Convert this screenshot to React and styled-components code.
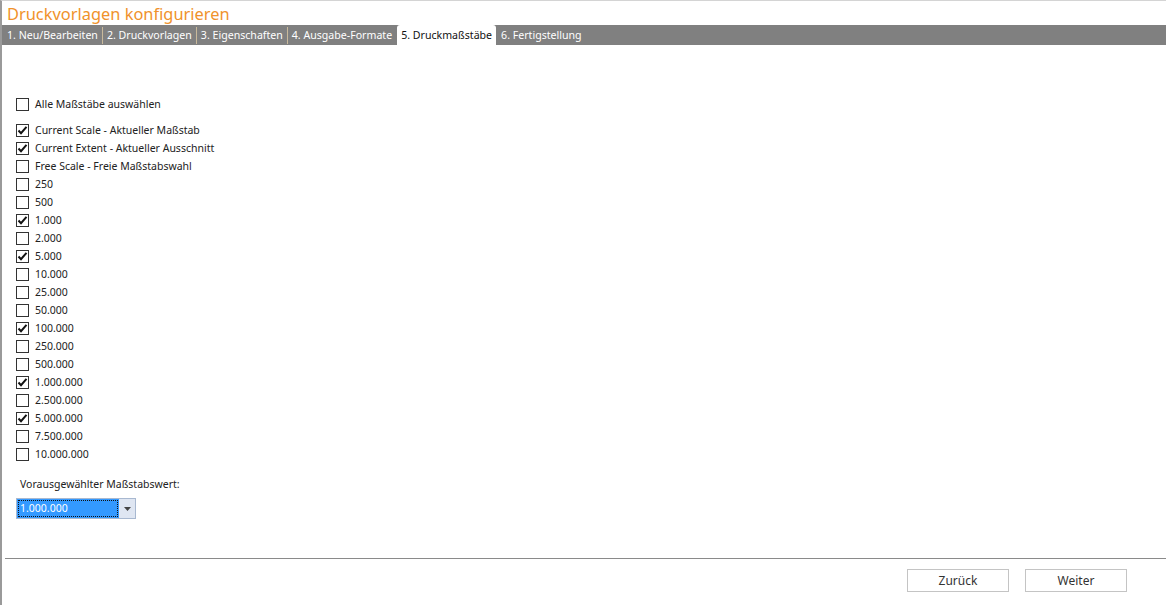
import React, { useState } from "react"
import styled, { createGlobalStyle } from "styled-components"

const GlobalStyle = createGlobalStyle`
html, body {
    margin:0;
    padding:0;
    background:#fff;
}
body{
    font-family:"Noto Sans", "Open Sans", sans-serif;
}
`

const tabs = [
    "1. Neu/Bearbeiten",
    "2. Druckvorlagen",
    "3. Eigenschaften",
    "4. Ausgabe-Formate",
    "5. Druckmaßstäbe",
    "6. Fertigstellung",
]

const scales = [
    ["Current Scale - Aktueller Maßstab", true],
    ["Current Extent - Aktueller Ausschnitt", true],
    ["Free Scale - Freie Maßstabswahl", false],
    ["250", false],
    ["500", false],
    ["1.000", true],
    ["2.000", false],
    ["5.000", true],
    ["10.000", false],
    ["25.000", false],
    ["50.000", false],
    ["100.000", true],
    ["250.000", false],
    ["500.000", false],
    ["1.000.000", true],
    ["2.500.000", false],
    ["5.000.000", true],
    ["7.500.000", false],
    ["10.000.000", false],
]

function Check({ checked, onClick, label }) {
    return (
        <Row onClick={onClick}>
            <Box>
                {checked && (
                    <svg width="11" height="11" viewBox="0 0 11 11">
                        <path d="M1.5 5.5 L4 8.2 L9.5 1.8" fill="none" stroke="#111" strokeWidth="2" />
                    </svg>
                )}
            </Box>
            <span>{label}</span>
        </Row>
    )
}

export default function App() {
    const [values, setValues] = useState(scales.map(s => s[1]))
    const all = values.every(v => v)
    const toggle = i => setValues(values.map((v, j) => (j === i ? !v : v)))
    return (
        <>
            <GlobalStyle />
            <Page>
                <Title>Druckvorlagen konfigurieren</Title>
                <TabBar>
                    {tabs.map((t, i) => (
                        <Tab key={t} $active={i === 4} $sep={i < 3}>{t}</Tab>
                    ))}
                </TabBar>
                <Content>
                    <Check label="Alle Maßstäbe auswählen" checked={all} onClick={() => setValues(values.map(() => !all))} />
                    <List>
                        {scales.map((s, i) => (
                            <Check key={s[0]} label={s[0]} checked={values[i]} onClick={() => toggle(i)} />
                        ))}
                    </List>
                    <FieldLabel>Vorausgewählter Maßstabswert:</FieldLabel>
                    <Select>
                        <SelectValue><span>1.000.000</span></SelectValue>
                        <SelectArrow>
                            <svg width="7" height="4" viewBox="0 0 7 4"><path d="M0 0 H7 L3.5 4 Z" fill="#444" /></svg>
                        </SelectArrow>
                    </Select>
                </Content>
                <Footer>
                    <Button>Zurück</Button>
                    <Button>Weiter</Button>
                </Footer>
            </Page>
        </>
    )
}

const Page = styled.div`
width:1166px;
height:605px;
box-sizing:border-box;
border-top:1px solid #d4d4d4;
border-left:2px solid #9a9a9a;
display:flex;
flex-direction:column;
overflow:hidden;
`

const Title = styled.div`
color:#f0922b;
font-size:16.4px;
line-height:22px;
height:24px;
padding-left:5px;
box-sizing:border-box;
padding-top:2px;
`

const TabBar = styled.div`
background:#808080;
height:20px;
display:flex;
align-items:flex-end;
padding-left:1px;
`

const Tab = styled.div`
height:20px;
box-sizing:border-box;
padding:0 4px;
font-size:10.6px;
line-height:20px;
color:${p => (p.$active ? "#111" : "#fff")};
background:${p => (p.$active ? "#fff" : "transparent")};
border-radius:${p => (p.$active ? "3px 3px 0 0" : "0")};
position:relative;
margin-right:1px;
white-space:nowrap;
&::after{
    content:"";
    display:${p => (p.$sep ? "block" : "none")};
    position:absolute;
    right:-1px;
    top:2px;
    bottom:1px;
    width:1px;
    background:#c9b99b;
}
`

const Content = styled.div`
flex:1;
padding:50px 0 0 14px;
display:flex;
flex-direction:column;
`

const List = styled.div`
margin-top:8px;
display:flex;
flex-direction:column;
`

const Row = styled.div`
display:flex;
align-items:center;
gap:6px;
height:18px;
font-size:10.5px;
color:#222;
cursor:default;
`

const Box = styled.div`
width:13px;
height:13px;
box-sizing:border-box;
border:1px solid #333;
background:#fff;
display:flex;
align-items:center;
justify-content:center;
`

const FieldLabel = styled.div`
margin-top:14px;
padding-left:4px;
font-size:10.5px;
color:#222;
line-height:14px;
`

const Select = styled.div`
margin-top:7px;
width:120px;
height:21px;
box-sizing:border-box;
border:1px solid #a8b8d0;
display:flex;
`

const SelectValue = styled.div`
flex:1;
background:#3399ff;
padding:1px;
box-sizing:border-box;
span{
    display:block;
    height:100%;
    box-sizing:border-box;
    border:1px dotted #111;
    color:#fff;
    font-size:10.5px;
    line-height:15px;
    padding-left:1px;
}
`

const SelectArrow = styled.div`
width:16px;
background:#dfe6f2;
display:flex;
align-items:center;
justify-content:center;
`

const Footer = styled.div`
margin-left:3px;
height:47px;
box-sizing:border-box;
border-top:1px solid #8a8a8a;
display:flex;
justify-content:flex-end;
align-items:flex-start;
gap:16px;
padding:10px 39px 0 0;
flex-shrink:0;
`

const Button = styled.div`
width:102px;
height:23px;
box-sizing:border-box;
border:1px solid #c4c4c4;
background:#fff;
font-size:12px;
color:#333;
display:flex;
align-items:center;
justify-content:center;
`
